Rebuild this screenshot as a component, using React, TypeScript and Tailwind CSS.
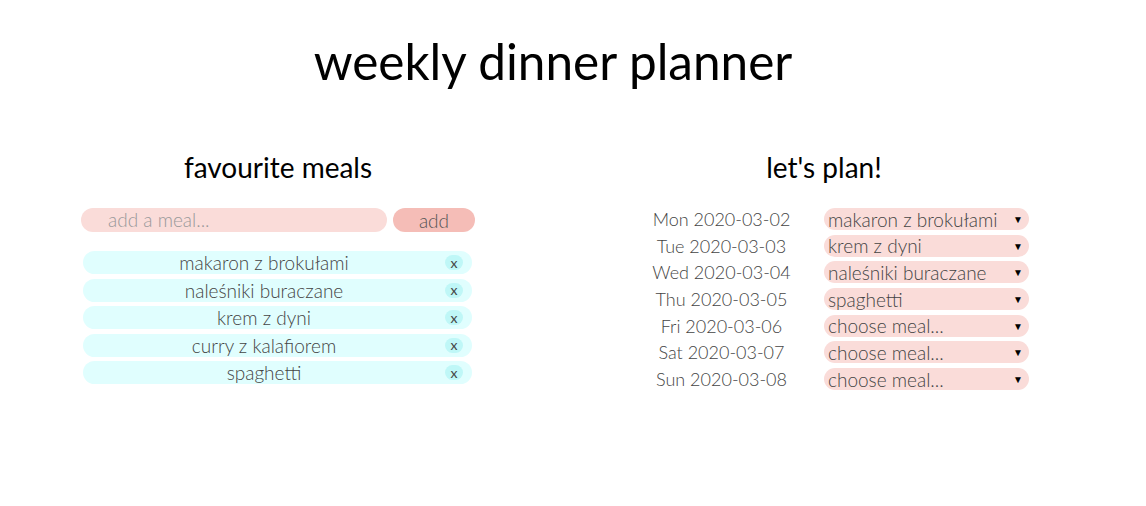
import { useState } from "react";

const meals = [
  "makaron z brokułami",
  "naleśniki buraczane",
  "krem z dyni",
  "curry z kalafiorem",
  "spaghetti",
];

const days = [
  { label: "Mon 2020-03-02", meal: "makaron z brokułami" },
  { label: "Tue 2020-03-03", meal: "krem z dyni" },
  { label: "Wed 2020-03-04", meal: "naleśniki buraczane" },
  { label: "Thu 2020-03-05", meal: "spaghetti" },
  { label: "Fri 2020-03-06", meal: "" },
  { label: "Sat 2020-03-07", meal: "" },
  { label: "Sun 2020-03-08", meal: "" },
];

function MealSelect({ value }: { value: string }) {
  return (
    <div className="flex h-[22px] w-[205px] items-center justify-between rounded-full bg-[#fadcd9] pl-[4px] pr-[6px]">
      <span className="text-[19px] leading-none font-light text-[#444]">
        {value || "choose meal..."}
      </span>
      <span className="text-[10px] leading-none text-black">▼</span>
    </div>
  );
}

export default function App() {
  const [meal, setMeal] = useState("");

  return (
    <div className="min-h-[506px] w-[1106px] bg-white pt-[33px] font-['Lato',sans-serif] text-black">
      <h1 className="text-center text-[49.5px] leading-[56px] font-normal">
        weekly dinner planner
      </h1>

      <div className="mt-[61px] flex gap-[144px] pl-[81px]">
        {/* favourites */}
        <section className="w-[394px]">
          <h2 className="text-center text-[28px] leading-[34px]">
            favourite meals
          </h2>
          <form
            className="mt-[24px] flex gap-[6px]"
            onSubmit={(e) => e.preventDefault()}
          >
            <input
              value={meal}
              onChange={(e) => setMeal(e.target.value)}
              placeholder="add a meal..."
              className="h-[24px] w-[306px] rounded-full bg-[#fadcd9] pl-[27px] text-[19px] font-light text-[#444] outline-none placeholder:text-[#999]"
            />
            <button
              type="submit"
              className="h-[24px] w-[82px] rounded-full bg-[#f5bdb7] text-[19px] leading-none font-light text-[#555]"
            >
              add
            </button>
          </form>
          <ul className="mt-[19px] ml-[2px] flex w-[389px] flex-col gap-[4.5px]">
            {meals.map((m) => (
              <li
                key={m}
                className="flex h-[23px] items-center rounded-full bg-[#e0fefe] pr-[9px]"
              >
                <span className="flex-1 pl-[30px] text-center text-[19px] leading-none font-light text-[#444]">
                  {m}
                </span>
                <button className="ml-[30px] flex h-[15px] w-[18px] items-center justify-center rounded-full bg-[#bff7f7] text-[14px] leading-none text-[#444]">
                  x
                </button>
              </li>
            ))}
          </ul>
        </section>

        {/* planner */}
        <section className="w-[410px]">
          <h2 className="text-center text-[28px] leading-[34px]">
            let's plan!
          </h2>
          <div className="mt-[24px] flex flex-col gap-[4.7px]">
            {days.map((d) => (
              <div key={d.label} className="flex items-center">
                <span className="w-[205px] text-center text-[18px] leading-none font-light text-[#444]">
                  {d.label}
                </span>
                <MealSelect value={d.meal} />
              </div>
            ))}
          </div>
        </section>
      </div>
    </div>
  );
}
